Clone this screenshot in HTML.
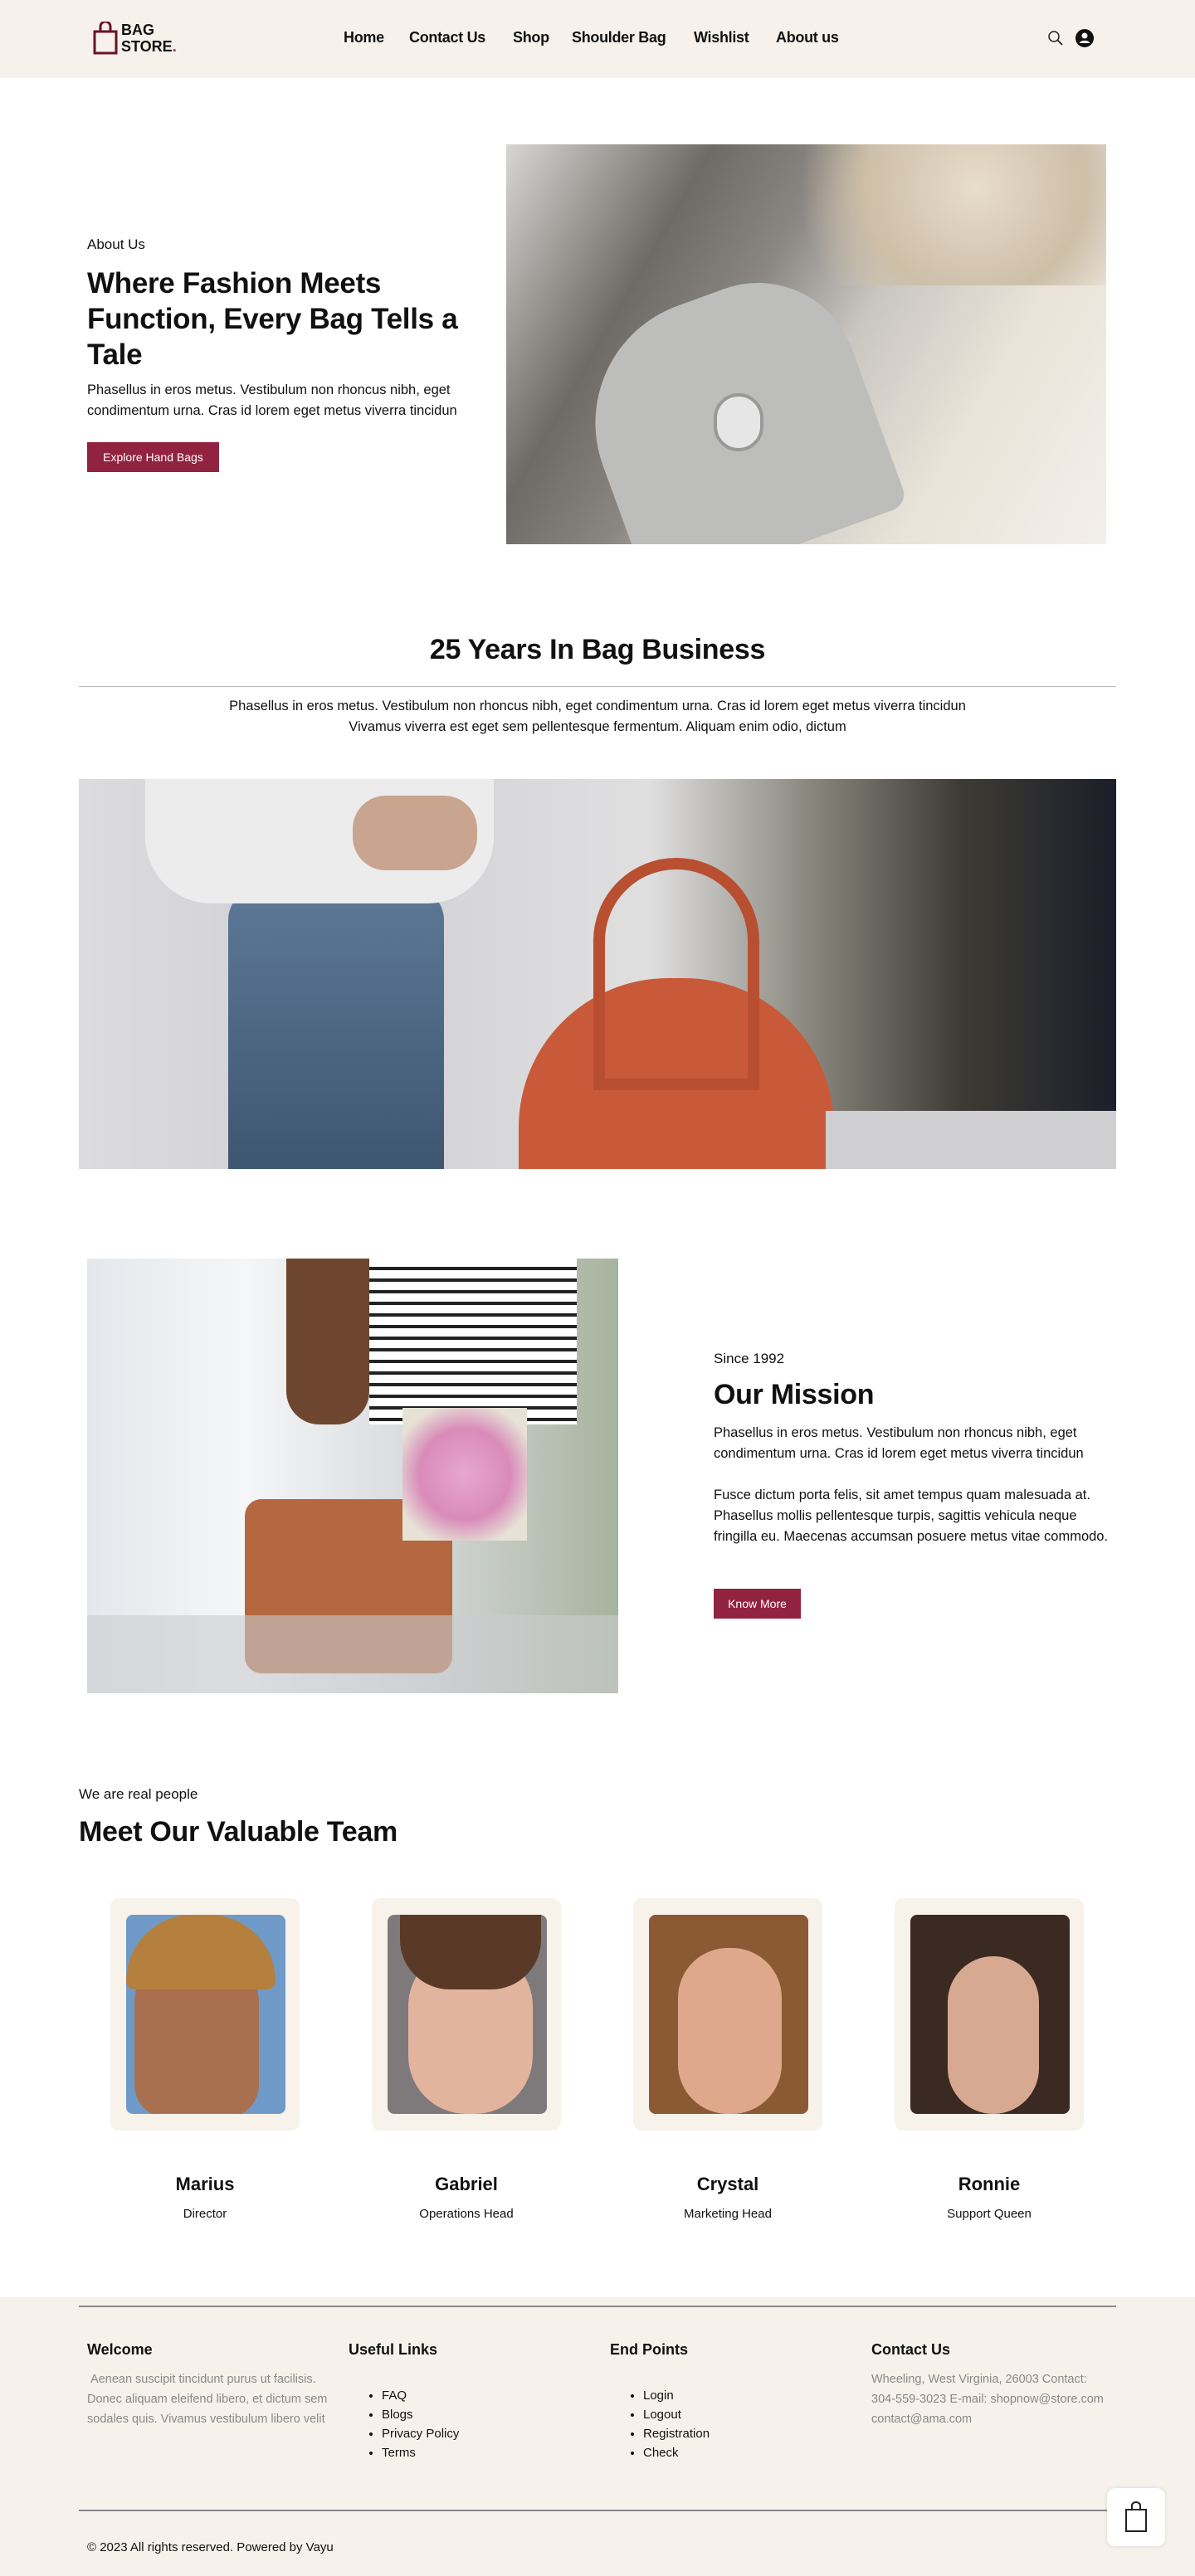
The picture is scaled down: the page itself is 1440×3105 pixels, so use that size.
<!DOCTYPE html>
<html><head><meta charset="utf-8"><style>
*{margin:0;padding:0;box-sizing:border-box}
body{width:1440px;height:3105px;font-family:"Liberation Sans",sans-serif;color:#111;background:#fff;position:relative;overflow:hidden}
.a{position:absolute}
header{position:absolute;left:0;top:0;width:1440px;height:94px;background:#f6f2eb}
nav a{position:absolute;top:35px;font-weight:bold;font-size:18px;color:#111;text-decoration:none;letter-spacing:-0.3px}
h1,h2,h3{font-weight:bold;letter-spacing:-0.3px}
.btn{position:absolute;background:#922340;color:#fff;font-size:14px;display:flex;align-items:center;justify-content:center}
.p{font-size:16.5px;line-height:25px;color:#111}
.card{position:absolute;top:2288px;width:228px;height:280px;background:#f7f3ea;border-radius:10px}
.card .ph{position:absolute;left:19px;top:20px;width:192px;height:240px;border-radius:8px;overflow:hidden}
.nm{position:absolute;top:2620px;width:228px;text-align:center;font-weight:bold;font-size:22px}
.rl{position:absolute;top:2660px;width:228px;text-align:center;font-size:15px}
.fh{position:absolute;top:2822px;font-weight:bold;font-size:18px}
.fl{position:absolute;top:2876px;font-size:15px;line-height:23px;list-style:disc;padding-left:20px}
.ft{position:absolute;top:2856px;font-size:14.5px;line-height:24px;color:#888}
</style></head><body>
<header>
<svg class="a" style="left:112px;top:26px" width="30" height="40" viewBox="0 0 30 40"><rect x="2" y="12" width="26" height="26" fill="none" stroke="#6b1228" stroke-width="3"/><path d="M9 12 V6 a6 6 0 0 1 12 0 V12" fill="none" stroke="#6b1228" stroke-width="3"/></svg>
<div class="a" style="left:146px;top:26px;font-weight:bold;font-size:18px;line-height:20px">BAG<br>STORE<span style="color:#922340">.</span></div>
<nav><a style="left:414px">Home</a><a style="left:493px">Contact Us</a><a style="left:618px">Shop</a><a style="left:689px">Shoulder Bag</a><a style="left:836px">Wishlist</a><a style="left:935px">About us</a></nav>
<svg class="a" style="left:1262px;top:36px" width="20" height="20" viewBox="0 0 20 20"><circle cx="8" cy="8" r="6" fill="none" stroke="#222" stroke-width="1.5"/><path d="M12.5 12.5 L18 18" stroke="#222" stroke-width="1.8"/></svg>
<svg class="a" style="left:1296px;top:35px" width="22" height="22" viewBox="0 0 22 22"><circle cx="11" cy="11" r="11" fill="#111"/><circle cx="11" cy="8" r="3.5" fill="#fff"/><path d="M4.5 17 a7 5 0 0 1 13 0" fill="#fff"/></svg>
</header>

<div class="a" style="left:105px;top:285px;font-size:17px">About Us</div>
<h1 class="a" style="left:105px;top:320px;font-size:35px;line-height:43px;width:490px">Where Fashion Meets Function, Every Bag Tells a Tale</h1>
<div class="a p" style="left:105px;top:458px;width:490px">Phasellus in eros metus. Vestibulum non rhoncus nibh, eget condimentum urna. Cras id lorem eget metus viverra tincidun</div>
<div class="btn" style="left:105px;top:533px;width:159px;height:36px">Explore Hand Bags</div>
<div class="a" style="left:610px;top:174px;width:723px;height:482px;overflow:hidden;background:linear-gradient(120deg,#d8d6d3 0%,#6e6a66 25%,#8a8682 40%,#c9c6c1 55%,#e9e3d8 75%,#f3efea 100%)">
<div class="a" style="left:110px;top:180px;width:330px;height:320px;background:#bdbdbb;border-radius:150px 120px 20px 20px;transform:rotate(-20deg)"></div>
<div class="a" style="left:250px;top:300px;width:60px;height:70px;border-radius:30px;background:#e6e6e6;border:4px solid #999"></div>
<div class="a" style="left:330px;top:0;width:393px;height:170px;background:radial-gradient(circle at 60% 30%,#e8dccb,#cdbfa8 50%,transparent 80%)"></div>
</div>

<h2 class="a" style="left:0;width:1440px;text-align:center;top:764px;font-size:34px">25 Years In Bag Business</h2>
<div class="a" style="left:95px;top:827px;width:1250px;height:1px;background:#bbb"></div>
<div class="a p" style="left:0;width:1440px;text-align:center;top:839px;line-height:25px">Phasellus in eros metus. Vestibulum non rhoncus nibh, eget condimentum urna. Cras id lorem eget metus viverra tincidun<br>Vivamus viverra est eget sem pellentesque fermentum. Aliquam enim odio, dictum</div>
<div class="a" style="left:95px;top:939px;width:1250px;height:470px;overflow:hidden;background:linear-gradient(90deg,#dcdcde 0%,#cfcfd3 25%,#e0dfe0 55%,#8c8a80 70%,#3d3b34 85%,#1c1f2a 100%)">
<div class="a" style="left:180px;top:130px;width:260px;height:340px;background:linear-gradient(180deg,#5d7897,#3e5670);border-radius:40px 40px 0 0"></div>
<div class="a" style="left:80px;top:0;width:420px;height:150px;background:#ececec;border-radius:0 0 80px 80px"></div>
<div class="a" style="left:330px;top:20px;width:150px;height:90px;background:#c9a48e;border-radius:40px"></div>
<div class="a" style="left:530px;top:240px;width:380px;height:240px;background:#c85a3a;border-radius:180px 180px 0 0"></div>
<div class="a" style="left:620px;top:95px;width:200px;height:280px;border:14px solid #b94f31;border-radius:100px 100px 0 0"></div>
<div class="a" style="left:900px;top:400px;width:350px;height:70px;background:#cfcfd2"></div>
</div>

<div class="a" style="left:105px;top:1517px;width:640px;height:524px;overflow:hidden;background:linear-gradient(90deg,#e4e8ec 0%,#f5f6f7 30%,#d9dbde 60%,#a8b39e 100%)">
<div class="a" style="left:340px;top:0;width:250px;height:200px;background:repeating-linear-gradient(180deg,#fff 0 10px,#222 10px 14px)"></div>
<div class="a" style="left:240px;top:0;width:100px;height:200px;background:#6e4630;border-radius:0 0 40px 40px"></div>
<div class="a" style="left:190px;top:290px;width:250px;height:210px;background:#b5683f;border-radius:20px"></div>
<div class="a" style="left:380px;top:180px;width:150px;height:160px;background:radial-gradient(circle,#e7a7cf,#d98bb9 50%,#e6e2d6 80%)"></div>
<div class="a" style="left:0;top:430px;width:640px;height:94px;background:#c9ccce;opacity:.6"></div>
</div>
<div class="a" style="left:860px;top:1628px;font-size:17px">Since 1992</div>
<h2 class="a" style="left:860px;top:1662px;font-size:34px">Our Mission</h2>
<div class="a p" style="left:860px;top:1715px;width:480px">Phasellus in eros metus. Vestibulum non rhoncus nibh, eget condimentum urna. Cras id lorem eget metus viverra tincidun</div>
<div class="a p" style="left:860px;top:1790px;width:480px">Fusce dictum porta felis, sit amet tempus quam malesuada at. Phasellus mollis pellentesque turpis, sagittis vehicula neque fringilla eu. Maecenas accumsan posuere metus vitae commodo.</div>
<div class="btn" style="left:860px;top:1915px;width:105px;height:36px">Know More</div>

<div class="a" style="left:95px;top:2153px;font-size:17px">We are real people</div>
<h2 class="a" style="left:95px;top:2189px;font-size:34px">Meet Our Valuable Team</h2>
<div class="card" style="left:133px"><div class="ph" style="background:#6f9ac8"><div class="a" style="left:10px;top:45px;width:150px;height:200px;background:#a8704f;border-radius:60px 60px 40px 40px"></div><div class="a" style="left:0;top:0;width:180px;height:90px;background:#b57f3e;border-radius:80px 80px 10px 10px"></div></div></div>
<div class="card" style="left:448px"><div class="ph" style="background:#7e7a7c"><div class="a" style="left:25px;top:40px;width:150px;height:200px;background:#e2b49e;border-radius:70px"></div><div class="a" style="left:15px;top:0;width:170px;height:90px;background:#5a3a27;border-radius:0 0 60px 60px"></div></div></div>
<div class="card" style="left:763px"><div class="ph" style="background:#8a5a35"><div class="a" style="left:35px;top:40px;width:125px;height:200px;background:#dfa88d;border-radius:60px"></div></div></div>
<div class="card" style="left:1078px"><div class="ph" style="background:#3b2a22"><div class="a" style="left:45px;top:50px;width:110px;height:190px;background:#d8a991;border-radius:55px"></div></div></div>
<div class="nm" style="left:133px">Marius</div><div class="rl" style="left:133px">Director</div>
<div class="nm" style="left:448px">Gabriel</div><div class="rl" style="left:448px">Operations Head</div>
<div class="nm" style="left:763px">Crystal</div><div class="rl" style="left:763px">Marketing Head</div>
<div class="nm" style="left:1078px">Ronnie</div><div class="rl" style="left:1078px">Support Queen</div>

<div class="a" style="left:0;top:2769px;width:1440px;height:336px;background:#f6f2eb"></div>
<div class="a" style="left:95px;top:2779px;width:1250px;height:2px;background:#888"></div>
<div class="fh" style="left:105px">Welcome</div>
<div class="fh" style="left:420px">Useful Links</div>
<div class="fh" style="left:735px">End Points</div>
<div class="fh" style="left:1050px">Contact Us</div>
<div class="ft" style="left:105px;width:290px">&nbsp;Aenean suscipit tincidunt purus ut facilisis. Donec aliquam eleifend libero, et dictum sem sodales quis. Vivamus vestibulum libero velit</div>
<ul class="fl" style="left:440px"><li>FAQ</li><li>Blogs</li><li>Privacy Policy</li><li>Terms</li></ul>
<ul class="fl" style="left:755px"><li>Login</li><li>Logout</li><li>Registration</li><li>Check</li></ul>
<div class="ft" style="left:1050px;width:285px">Wheeling, West Virginia, 26003 Contact: 304-559-3023 E-mail: shopnow@store.com contact@ama.com</div>
<div class="a" style="left:95px;top:3025px;width:1250px;height:2px;background:#888"></div>
<div class="a" style="left:105px;top:3062px;font-size:15px">© 2023 All rights reserved. Powered by Vayu</div>
<div class="a" style="left:1334px;top:2999px;width:70px;height:70px;background:#fff;border-radius:10px;box-shadow:0 0 6px rgba(0,0,0,.1)">
<svg class="a" style="left:21px;top:16px" width="28" height="38" viewBox="0 0 28 38"><rect x="2" y="10" width="24" height="26" fill="none" stroke="#222" stroke-width="2"/><path d="M9 10 V5 a5 4 0 0 1 10 0 V10" fill="none" stroke="#222" stroke-width="2"/></svg></div>
</body></html>
